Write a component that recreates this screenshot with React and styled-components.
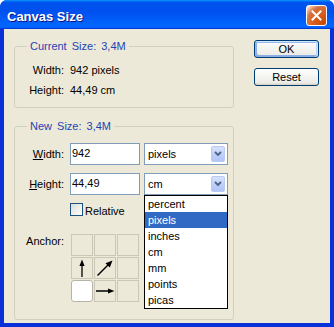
import React from "react";
import styled, { createGlobalStyle } from "styled-components";

const Global = createGlobalStyle`
  html, body { margin: 0; padding: 0; background: #ffffff; overflow: hidden; }
  body { font-family: "Liberation Sans", Arial, sans-serif; font-size: 11px; color: #000; }
  * { box-sizing: border-box; }
`;

const Window = styled.div`
  width: 334px;
  height: 327px;
  display: flex;
  flex-direction: column;
  border-radius: 7px 7px 0 0;
  overflow: hidden;
  background: #0831d9;
`;

const TitleBar = styled.div`
  height: 29px;
  flex-shrink: 0;
  display: flex;
  align-items: center;
  justify-content: space-between;
  padding: 0 7px 0 7px;
  background: linear-gradient(
    180deg,
    #0997ff 0%,
    #0053ee 8%,
    #0050ee 40%,
    #0066ff 88%,
    #0066ff 93%,
    #005bff 95%,
    #003dd7 96%,
    #003dd7 100%
  );
`;

const Title = styled.div`
  color: #ffffff;
  font-family: "Liberation Sans", Arial, sans-serif;
  font-weight: bold;
  font-size: 13px;
  padding-top: 3px;
  text-shadow: 1px 1px #0f1089;
`;

const CloseButton = styled.div`
  width: 21px;
  height: 21px;
  margin-top: 2px;
  border: 1px solid #ffffff;
  border-radius: 3px;
  display: flex;
  align-items: center;
  justify-content: center;
  background: radial-gradient(
    circle at 90% 90%,
    #cc4600 0%,
    #dc6527 55%,
    #cd7546 70%,
    #ffccb2 90%,
    #ffffff 100%
  );
`;

const Body = styled.div`
  flex: 1;
  min-height: 0;
  display: flex;
  gap: 20px;
  background: #ece9d8;
  border-style: solid;
  border-color: #0831d9;
  border-width: 0 4px 4px 4px;
  padding: 11px 11px 3px 10px;
`;

const LeftCol = styled.div`
  width: 220px;
  display: flex;
  flex-direction: column;
  gap: 12px;
`;

const RightCol = styled.div`
  width: 65px;
  display: flex;
  flex-direction: column;
  gap: 10px;
`;

const Group = styled.fieldset`
  margin: 0;
  padding: 0;
  min-width: 0;
  height: ${(p) => p.$h}px;
  border: 1px solid #d0d0bf;
  border-radius: 3px;
`;

const Legend = styled.legend`
  margin-left: 12px;
  padding: 0 3px;
  line-height: 13px;
  font-size: 11px;
  color: #1e44b4;
  word-spacing: 2px;
`;

const InfoGrid = styled.div`
  display: grid;
  grid-template-columns: 49px auto;
  column-gap: 6px;
  row-gap: 4px;
  padding-top: 9px;
  line-height: 16px;
`;

const Label = styled.div`
  text-align: right;
  line-height: 16px;
  align-self: ${(p) => (p.$top ? "start" : "center")};
  margin-top: ${(p) => (p.$top ? "9px" : "0")};
`;

const Key = styled.span`
  text-decoration: underline;
`;

const FormGrid = styled.div`
  display: grid;
  grid-template-columns: 49px auto;
  column-gap: 6px;
  row-gap: 8px;
  align-items: center;
  padding-top: 10px;
`;

const Controls = styled.div`
  display: flex;
  gap: 4px;
  align-items: center;
`;

const TextBox = styled.input`
  width: 70px;
  height: 22px;
  margin: 0;
  border: 1px solid #7f9db9;
  padding: 0 2px 2px 1px;
  background: #ffffff;
  font-family: "Liberation Sans", Arial, sans-serif;
  font-size: 11px;
  color: #000;
  outline: none;
`;

const Select = styled.div`
  position: relative;
  width: 84px;
  height: 22px;
  border: 1px solid #7f9db9;
  background: #ffffff;
  display: flex;
  align-items: center;
  justify-content: space-between;
  padding-left: 3px;
  padding-bottom: 1px;
`;

const DropButton = styled.div`
  width: 14px;
  height: 16px;
  margin-right: 2px;
  margin-top: 1px;
  border: 1px solid #b9cbf3;
  border-radius: 2px;
  background: linear-gradient(180deg, #d7e2fc 0%, #bccdf8 60%, #b1c5f6 100%);
  display: flex;
  align-items: center;
  justify-content: center;
`;

const ListBox = styled.div`
  position: absolute;
  top: calc(100% + 1px);
  left: -1px;
  width: 84px;
  border: 1px solid #000000;
  background: #ffffff;
  z-index: 5;
`;

const ListItem = styled.div`
  height: 16px;
  line-height: 16px;
  padding-left: 3px;
  background: ${(p) => (p.$active ? "#316ac5" : "transparent")};
  color: ${(p) => (p.$active ? "#ffffff" : "#000000")};
`;

const CheckRow = styled.label`
  display: flex;
  align-items: center;
  gap: 2px;
  height: 13px;
`;

const CheckBox = styled.span`
  width: 13px;
  height: 13px;
  border: 1px solid #1c5180;
  background: linear-gradient(135deg, #dcdcd7 0%, #ffffff 100%);
  flex-shrink: 0;
`;

const CheckText = styled.span`
  line-height: 13px;
  padding-top: 3px;
`;

const AnchorGrid = styled.div`
  display: grid;
  grid-template-columns: repeat(3, 22px);
  grid-auto-rows: 22px;
  gap: 1px;
  margin-left: 1px;
  margin-top: 10px;
`;

const Cell = styled.div`
  border: 1px solid ${(p) => (p.$sel ? "#b7b4a5" : "#cbc7b7")};
  border-radius: ${(p) => (p.$sel ? "3px" : "0")};
  background: ${(p) => (p.$sel ? "#ffffff" : "#ece9d8")};
  display: flex;
  align-items: center;
  justify-content: center;
`;

const Button = styled.button`
  width: 65px;
  height: 18px;
  margin: 0;
  padding: 0;
  border: 1px solid #003c74;
  border-radius: 3px;
  font-family: "Liberation Sans", Arial, sans-serif;
  font-size: 11px;
  color: #000;
  background: linear-gradient(180deg, #ffffff 0%, #ecebe6 86%, #d6d0c5 100%);
  box-shadow: ${(p) =>
    p.$default
      ? "inset -1px 1px #cee7ff, inset 1px 2px #98b8ea, inset -2px 0 #bcd4f6, inset 1px -1px #89ade4, inset 2px -2px #89ade4"
      : "none"};
`;

const Arrow = ({ dir }) => {
  if (dir === "up")
    return (
      <svg width="20" height="20" viewBox="0 0 20 20">
        <line x1="10" y1="19" x2="10" y2="6" stroke="#000" strokeWidth="1.3" />
        <polygon points="10,1.5 7.4,8 12.6,8" fill="#000" />
      </svg>
    );
  if (dir === "ne")
    return (
      <svg width="20" height="20" viewBox="0 0 20 20">
        <line x1="2.5" y1="17.5" x2="14" y2="6" stroke="#000" strokeWidth="1.4" />
        <polygon points="17.5,2.5 10.5,5.2 14.8,9.5" fill="#000" />
      </svg>
    );
  return (
    <svg width="20" height="20" viewBox="0 0 20 20">
      <line x1="1" y1="10" x2="14" y2="10" stroke="#000" strokeWidth="1.3" />
      <polygon points="19.5,10 13,7.4 13,12.6" fill="#000" />
    </svg>
  );
};

const Chevron = () => (
  <svg width="8" height="6" viewBox="0 0 8 6">
    <polyline points="1,1 4,4 7,1" fill="none" stroke="#4d6185" strokeWidth="1.8" />
  </svg>
);

const units = ["percent", "pixels", "inches", "cm", "mm", "points", "picas"];

export default function App() {
  return (
    <>
      <Global />
      <Window>
        <TitleBar>
          <Title>Canvas Size</Title>
          <CloseButton>
            <svg width="11" height="11" viewBox="0 0 11 11">
              <path d="M1.5 1.5 L9.5 9.5 M9.5 1.5 L1.5 9.5" stroke="#fff" strokeWidth="2" strokeLinecap="square" />
            </svg>
          </CloseButton>
        </TitleBar>
        <Body>
          <LeftCol>
            <Group $h={68}>
              <Legend>Current Size: 3,4M</Legend>
              <InfoGrid>
                <Label>Width:</Label>
                <div>942 pixels</div>
                <Label>Height:</Label>
                <div>44,49 cm</div>
              </InfoGrid>
            </Group>
            <Group $h={200}>
              <Legend>New Size: 3,4M</Legend>
              <FormGrid>
                <Label>
                  <Key>W</Key>idth:
                </Label>
                <Controls>
                  <TextBox defaultValue="942" />
                  <Select>
                    <span>pixels</span>
                    <DropButton>
                      <Chevron />
                    </DropButton>
                  </Select>
                </Controls>
                <Label>
                  <Key>H</Key>eight:
                </Label>
                <Controls>
                  <TextBox defaultValue="44,49" />
                  <Select>
                    <span>cm</span>
                    <DropButton>
                      <Chevron />
                    </DropButton>
                    <ListBox>
                      {units.map((u) => (
                        <ListItem key={u} $active={u === "pixels"}>
                          {u}
                        </ListItem>
                      ))}
                    </ListBox>
                  </Select>
                </Controls>
                <div />
                <CheckRow>
                  <CheckBox />
                  <CheckText>Relative</CheckText>
                </CheckRow>
                <Label $top>Anchor:</Label>
                <AnchorGrid>
                  <Cell />
                  <Cell />
                  <Cell />
                  <Cell>
                    <Arrow dir="up" />
                  </Cell>
                  <Cell>
                    <Arrow dir="ne" />
                  </Cell>
                  <Cell />
                  <Cell $sel />
                  <Cell>
                    <Arrow dir="right" />
                  </Cell>
                  <Cell />
                </AnchorGrid>
              </FormGrid>
            </Group>
          </LeftCol>
          <RightCol>
            <Button $default>OK</Button>
            <Button>Reset</Button>
          </RightCol>
        </Body>
      </Window>
    </>
  );
}
